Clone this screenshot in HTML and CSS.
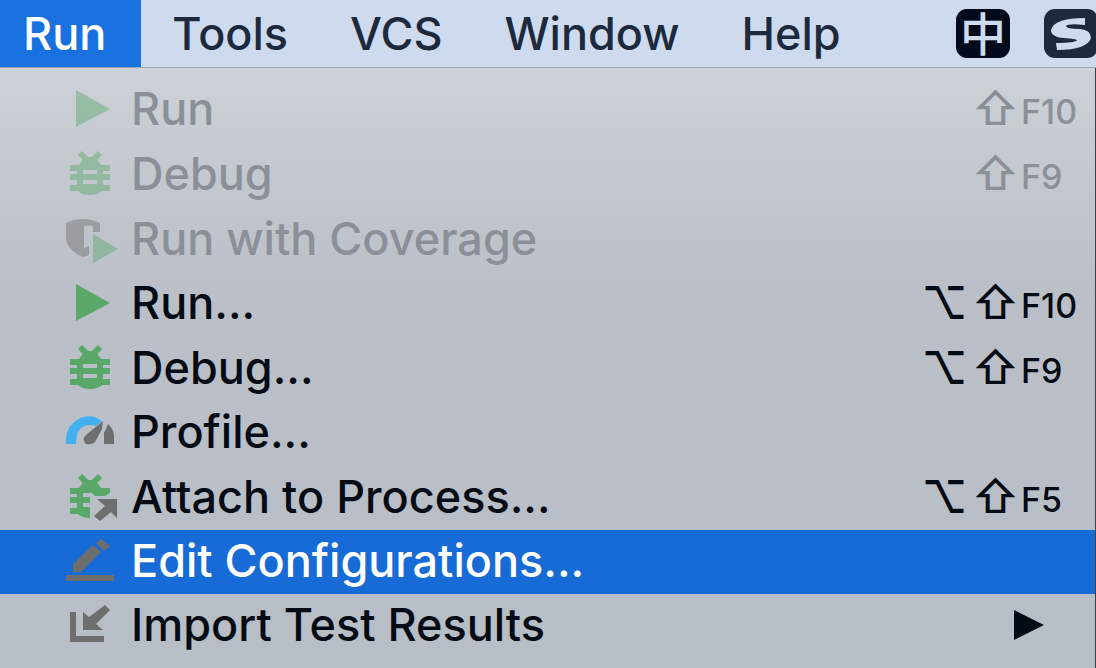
FILE: index.html
```html
<!DOCTYPE html>
<html lang="en">
<head>
<meta charset="utf-8">
<title>Run menu</title>
<link rel="stylesheet" href="styles.css">
</head>
<body>
<svg class="defs" aria-hidden="true">
  <symbol id="play" viewBox="0 0 54 48"><path d="M12 5 46 24 12 42Z" fill="#59a869"/></symbol>
  <symbol id="bug" viewBox="0 0 54 48">
    <path d="M16 3 23 10M36 3 29 10" stroke="#59a869" stroke-width="6"/>
    <path fill="#59a869" fill-rule="evenodd" d="M20 8Q26 6 32 8L37 15H46V21H39V24H46V30H39V35H46V41H38Q34 45 26 45Q18 45 14 41H6V35H13V30H6V24H13V21H6V15H15ZM19 20V24H33V20ZM19 30V34H33V30Z"/>
  </symbol>
  <symbol id="coverage" viewBox="0 0 54 48">
    <path fill="#6e6e6e" d="M2 8Q10 4 19 4Q28 4 36 8V17H29V11Q25 10 20 11V33L25 31V40L19 42Q2 35 2 22Z"/>
    <path fill="#59a869" d="M29 19 54 34 29 48Z"/>
  </symbol>
  <symbol id="profile" viewBox="0 0 54 48">
    <path fill="#40b0f0" d="M2 36V31Q3 18 13 12Q26 4 38 13L32 18Q22 15 16 21Q12 26 12 36Z"/>
    <path fill="#6e6e6e" d="M39 13 38 21 31 34Q28 37 22 36Q17 31 22 27ZM44 16Q50 21 50 29V36H40V25Z"/>
  </symbol>
  <symbol id="attach" viewBox="0 0 54 48">
    <path d="M16 3 23 10M36 3 29 10" stroke="#59a869" stroke-width="6"/>
    <path fill="#59a869" d="M20 8Q26 6 32 8L37 15H46V20L41 23H31L28 20H19V24H26V30H19V34H26V45Q18 45 14 41H6V35H13V30H6V24H13V21H6V15H15Z"/>
    <path fill="#6e6e6e" d="M33 26H53V45L47 39 36 48 30 43 41 33Z"/>
  </symbol>
  <symbol id="edit" viewBox="0 0 54 48">
    <path fill="#6e6e6e" d="M2 38H50V44H2ZM9 27 29 8 37 15 17 35H9ZM32 6 37 2 46 9 40 14Z"/>
  </symbol>
  <symbol id="import" viewBox="0 0 54 48">
    <path fill="#6e6e6e" d="M6 11H12V35H40V41H6ZM19 11 25 16 41 4 46 9 32 23 39 29H19Z"/>
  </symbol>
</svg>

<nav class="menubar">
  <button class="tab tab-open">Run</button>
  <button class="tab">Tools</button>
  <button class="tab">VCS</button>
  <button class="tab">Window</button>
  <button class="tab">Help</button>
  <div class="tray">
    <button class="badge badge-lang">中</button>
    <button class="badge badge-ime" aria-label="Input method">
      <svg viewBox="0 0 54 48" aria-hidden="true"><path fill="#cedbee" d="M41 8V15Q24 13 22 16Q22 19 36 19Q47 20 47 28Q43 40 13 40L12 33Q32 33 33 30Q32 29 20 28Q7 27 7 20Q10 8 41 8Z"/></svg>
    </button>
  </div>
</nav>

<main class="menu">
  <button class="item" disabled><svg class="icon"><use href="#play"/></svg><span class="label">Run</span><span class="mod"></span><span class="mod">⇧</span><span class="key">F10</span></button>
  <button class="item" disabled><svg class="icon"><use href="#bug"/></svg><span class="label">Debug</span><span class="mod"></span><span class="mod">⇧</span><span class="key">F9</span></button>
  <button class="item" disabled><svg class="icon"><use href="#coverage"/></svg><span class="label">Run with Coverage</span></button>
  <button class="item"><svg class="icon"><use href="#play"/></svg><span class="label">Run...</span><span class="mod">⌥</span><span class="mod">⇧</span><span class="key">F10</span></button>
  <button class="item"><svg class="icon"><use href="#bug"/></svg><span class="label">Debug...</span><span class="mod">⌥</span><span class="mod">⇧</span><span class="key">F9</span></button>
  <button class="item"><svg class="icon"><use href="#profile"/></svg><span class="label">Profile...</span></button>
  <button class="item"><svg class="icon"><use href="#attach"/></svg><span class="label">Attach to Process...</span><span class="mod">⌥</span><span class="mod">⇧</span><span class="key">F5</span></button>
  <button class="item item-active"><svg class="icon"><use href="#edit"/></svg><span class="label">Edit Configurations...</span></button>
  <button class="item"><svg class="icon"><use href="#import"/></svg><span class="label">Import Test Results</span><svg class="submenu" viewBox="0 0 30 30" aria-hidden="true"><path d="M0 0 30 15 0 30Z"/></svg></button>
</main>
</body>
</html>
```
FILE: styles.css
```css
* {
  box-sizing: border-box;
}

body {
  display: flex;
  flex-direction: column;
  min-height: 100vh;
  margin: 0;
  overflow-x: hidden;
  font-family: Inter, "Liberation Sans", "Noto Sans CJK SC", sans-serif;
  font-size: 45px;
  font-weight: 500;
  color: #050b14;
}

button {
  margin: 0;
  border: 0;
  padding: 0;
  background: none;
  color: inherit;
  font: inherit;
  text-align: left;
}

.defs {
  display: none;
}

.menubar {
  display: flex;
  height: 68px;
  border-bottom: 1px solid #9da5b2;
  background: #cedbee;
  color: #1d2a3e;
}

.tab {
  padding: 0 31px;
}

.tab-open {
  padding: 0 35px 0 23px;
  background: #1871de;
  color: #fff;
}

.tray {
  display: flex;
  flex: none;
  align-items: center;
  gap: 34px;
  margin-left: auto;
  margin-right: -2px;
}

.badge {
  width: 54px;
  height: 49px;
  border-radius: 11px;
}

.badge-lang {
  background: #020a1c;
  color: #cedbee;
  font-size: 46px;
  line-height: 48px;
  text-align: center;
}

.badge-ime {
  background: #1d2a3e;
}

.badge-ime svg {
  display: block;
}

.menu {
  display: flex;
  flex: 1;
  flex-direction: column;
  padding: 10px 0;
  border-right: 1px solid #3b4148;
  background: linear-gradient(#cdd2d9, #c4c9d0 100px, #bbc0c8 220px, #b8bec6);
}

.item {
  display: flex;
  flex: 1 0 auto;
  align-items: center;
  min-height: 64px;
  padding: 0 0 2px 64px;
  line-height: 52px;
}

.item:disabled {
  color: #8b9098;
}

.item:disabled .icon {
  opacity: 0.45;
}

.item-active {
  background: #166bd6;
  color: #fff;
}

.icon {
  flex: none;
  width: 54px;
  height: 48px;
  margin-right: 13px;
}

.label {
  flex: 1;
}

.mod {
  width: 51px;
  text-align: center;
}

.key {
  width: 74px;
  padding-top: 6px;
  font-size: 34px;
}

.submenu {
  width: 30px;
  height: 30px;
  margin-right: 51px;
  fill: currentColor;
}
```
